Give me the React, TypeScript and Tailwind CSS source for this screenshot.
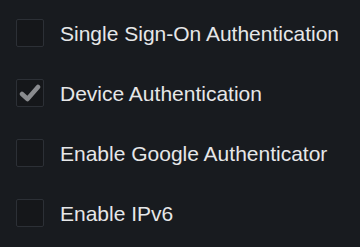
const options = [
  { label: "Single Sign-On Authentication", checked: false },
  { label: "Device Authentication", checked: true },
  { label: "Enable Google Authenticator", checked: false },
  { label: "Enable IPv6", checked: false },
];

export default function App() {
  return (
    <div className="w-[360px] h-[247px] bg-[#181b1f] overflow-hidden font-['Liberation_Sans',Arial,sans-serif]">
      <ul className="flex flex-col gap-8 pt-[19px] pl-4">
        {options.map((opt) => (
          <li key={opt.label} className="flex items-center gap-4 h-7">
            <span className="w-7 h-7 shrink-0 rounded-[2px] border border-[#2c3036] bg-[#15171a] flex items-center justify-center">
              {opt.checked && (
                <svg width="22" height="18" viewBox="0 0 22 18" className="text-[#8a8c8f]">
                  <path d="M3 10 L8.5 15 L19 3" fill="none" stroke="currentColor" strokeWidth="4.5" strokeLinecap="round" strokeLinejoin="round" />
                </svg>
              )}
            </span>
            <span className="text-[21px] leading-none text-[#e6e7e8]">{opt.label}</span>
          </li>
        ))}
      </ul>
    </div>
  );
}
